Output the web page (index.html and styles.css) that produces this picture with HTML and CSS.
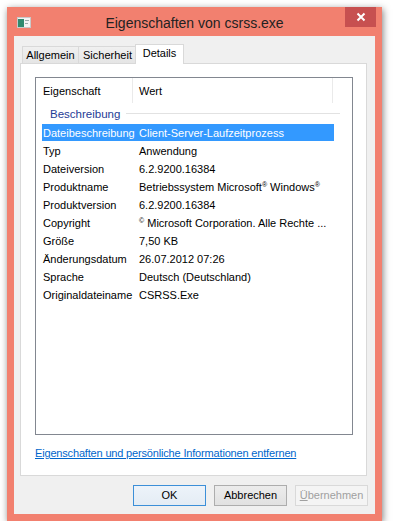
FILE: index.html
```html
<!DOCTYPE html>
<html lang="de">
<head>
  <meta charset="UTF-8">
  <title>Eigenschaften von csrss.exe</title>
  <link rel="stylesheet" href="styles.css">
</head>
<body>
  <div class="window">
    <div class="titlebar">
      <div class="app-icon">
        <svg width="14" height="11" viewBox="0 0 14 11">
          <rect x="0.5" y="0.5" width="13" height="10" fill="#f4f4f4" stroke="#c9c9c9"/>
          <rect x="1" y="2" width="6" height="8" fill="#2f8a6e"/>
          <rect x="8" y="3" width="4" height="1" fill="#9aa"/>
          <rect x="8" y="6" width="3" height="1" fill="#9aa"/>
        </svg>
      </div>
      <div class="title">Eigenschaften von csrss.exe</div>
      <div class="title-right">
        <div class="close">
          <svg width="10" height="10" viewBox="0 0 10 10">
            <path d="M1.5 1.5 L8.5 8.5 M8.5 1.5 L1.5 8.5" stroke="#fff" stroke-width="2"/>
          </svg>
        </div>
      </div>
    </div>

    <div class="client">
      <div class="tabs">
        <div class="tab">Allgemein</div>
        <div class="tab">Sicherheit</div>
        <div class="tab active">Details</div>
      </div>

      <div class="panel">
        <div class="listbox">
          <div class="list-head">
            <div class="hcell c1">Eigenschaft</div>
            <div class="hcell c2">Wert</div>
          </div>
          <div class="group">
            <span>Beschreibung</span>
            <i class="group-line"></i>
          </div>
          <div class="row selected"><span class="c1">Dateibeschreibung</span><span class="c2">Client-Server-Laufzeitprozess</span></div>
          <div class="row"><span class="c1">Typ</span><span class="c2">Anwendung</span></div>
          <div class="row"><span class="c1">Dateiversion</span><span class="c2">6.2.9200.16384</span></div>
          <div class="row"><span class="c1">Produktname</span><span class="c2">Betriebssystem Microsoft<sup>®</sup> Windows<sup>®</sup></span></div>
          <div class="row"><span class="c1">Produktversion</span><span class="c2">6.2.9200.16384</span></div>
          <div class="row"><span class="c1">Copyright</span><span class="c2"><sup>©</sup> Microsoft Corporation. Alle Rechte ...</span></div>
          <div class="row"><span class="c1">Größe</span><span class="c2">7,50 KB</span></div>
          <div class="row"><span class="c1">Änderungsdatum</span><span class="c2">26.07.2012 07:26</span></div>
          <div class="row"><span class="c1">Sprache</span><span class="c2">Deutsch (Deutschland)</span></div>
          <div class="row"><span class="c1">Originaldateiname</span><span class="c2">CSRSS.Exe</span></div>
        </div>
        <a class="link" href="#">Eigenschaften und persönliche Informationen entfernen</a>
      </div>

      <div class="buttons">
        <div class="btn default">OK</div>
        <div class="btn">Abbrechen</div>
        <div class="btn disabled"><u>Ü</u>bernehmen</div>
      </div>
    </div>
  </div>
</body>
</html>
```

FILE: styles.css
```css
* {
  box-sizing: border-box;
}
html, body {
  margin: 0;
  padding: 0;
}
body {
  background: #fff;
  padding: 7px 0 0 7px;
  font-family: "Liberation Sans", Arial, sans-serif;
  font-size: 11px;
  color: #000;
}

.window {
  width: 375px;
  height: 514px;
  background: #f2806f;
  box-shadow: 1px 2px 7px rgba(0, 0, 0, 0.5);
  display: flex;
  flex-direction: column;
}

/* title bar */
.titlebar {
  height: 29px;
  display: grid;
  grid-template-columns: 1fr auto 1fr;
}
.app-icon {
  padding: 10px 0 0 10px;
}
.title {
  font-size: 14px;
  color: #222;
  padding-top: 8px;
}
.title-right {
  display: flex;
  justify-content: flex-end;
  padding-right: 6px;
}
.close {
  width: 31px;
  height: 20px;
  background: #c75050;
  display: flex;
  align-items: center;
  justify-content: center;
}

/* client area */
.client {
  flex: 1;
  margin: 0 7px 7px 7px;
  background: #f0f0f0;
  padding: 8px 8px 0 6px;
  display: flex;
  flex-direction: column;
}
.tabs {
  display: flex;
  align-items: flex-end;
  padding-left: 2px;
  height: 19px;
}
.tab {
  height: 17px;
  line-height: 17px;
  border: 1px solid #d9d9d9;
  border-bottom: none;
  margin-right: -1px;
  background: linear-gradient(#f0f0f0, #e5e5e5);
  text-align: center;
}
.tab:nth-child(1) { width: 57px; }
.tab:nth-child(2) { width: 59px; }
.tab.active {
  width: 49px;
  height: 20px;
  margin: 0 0 -1px -1px;
  background: #fff;
  position: relative;
  z-index: 1;
  line-height: 17px;
}

.panel {
  flex: 1;
  background: #fff;
  border: 1px solid #d9d9d9;
  padding: 13px 13px 0 14px;
}

/* list view */
.listbox {
  height: 358px;
  border: 1px solid #828790;
}
.list-head {
  height: 25px;
  display: flex;
}
.hcell {
  line-height: 27px;
  border-right: 1px solid #eaeaea;
}
.hcell.c1 {
  width: 97px;
  padding-left: 7px;
}
.hcell.c2 {
  width: 200px;
  padding-left: 6px;
}
.group {
  height: 21px;
  display: flex;
  align-items: center;
  padding-left: 14px;
  color: #1e3c96;
  font-size: 11.5px;
}
.group-line {
  flex: 1;
  height: 1px;
  background: #e2e2e2;
  margin: 0 12px 0 6px;
}
.row {
  height: 18px;
  width: 292px;
  margin-left: 6px;
  display: flex;
  line-height: 18px;
  white-space: nowrap;
}
.row .c1 {
  width: 97px;
  flex-shrink: 0;
  padding-left: 1px;
}
.row.selected {
  background: linear-gradient(#3399ff 17px, transparent 17px);
  color: #fff;
}
sup {
  font-size: 7px;
  vertical-align: 4px;
  line-height: 0;
}

.link {
  display: inline-block;
  margin-top: 12px;
  color: #0066cc;
  text-decoration: underline;
  letter-spacing: -0.17px;
}

/* buttons */
.buttons {
  height: 21px;
  margin: 9px -1px 8px 0;
  display: flex;
  justify-content: flex-end;
  gap: 8px;
}
.btn {
  width: 73px;
  height: 21px;
  line-height: 19px;
  text-align: center;
  border: 1px solid #adadad;
  background: linear-gradient(#ececec, #e1e1e1);
}
.btn.default {
  border-color: #3c8fd8;
  background: linear-gradient(#edf3fa, #e4ecf4);
}
.btn.disabled {
  color: #a0a0a0;
  border-color: #d9d9d9;
  background: #f4f4f4;
}
```
